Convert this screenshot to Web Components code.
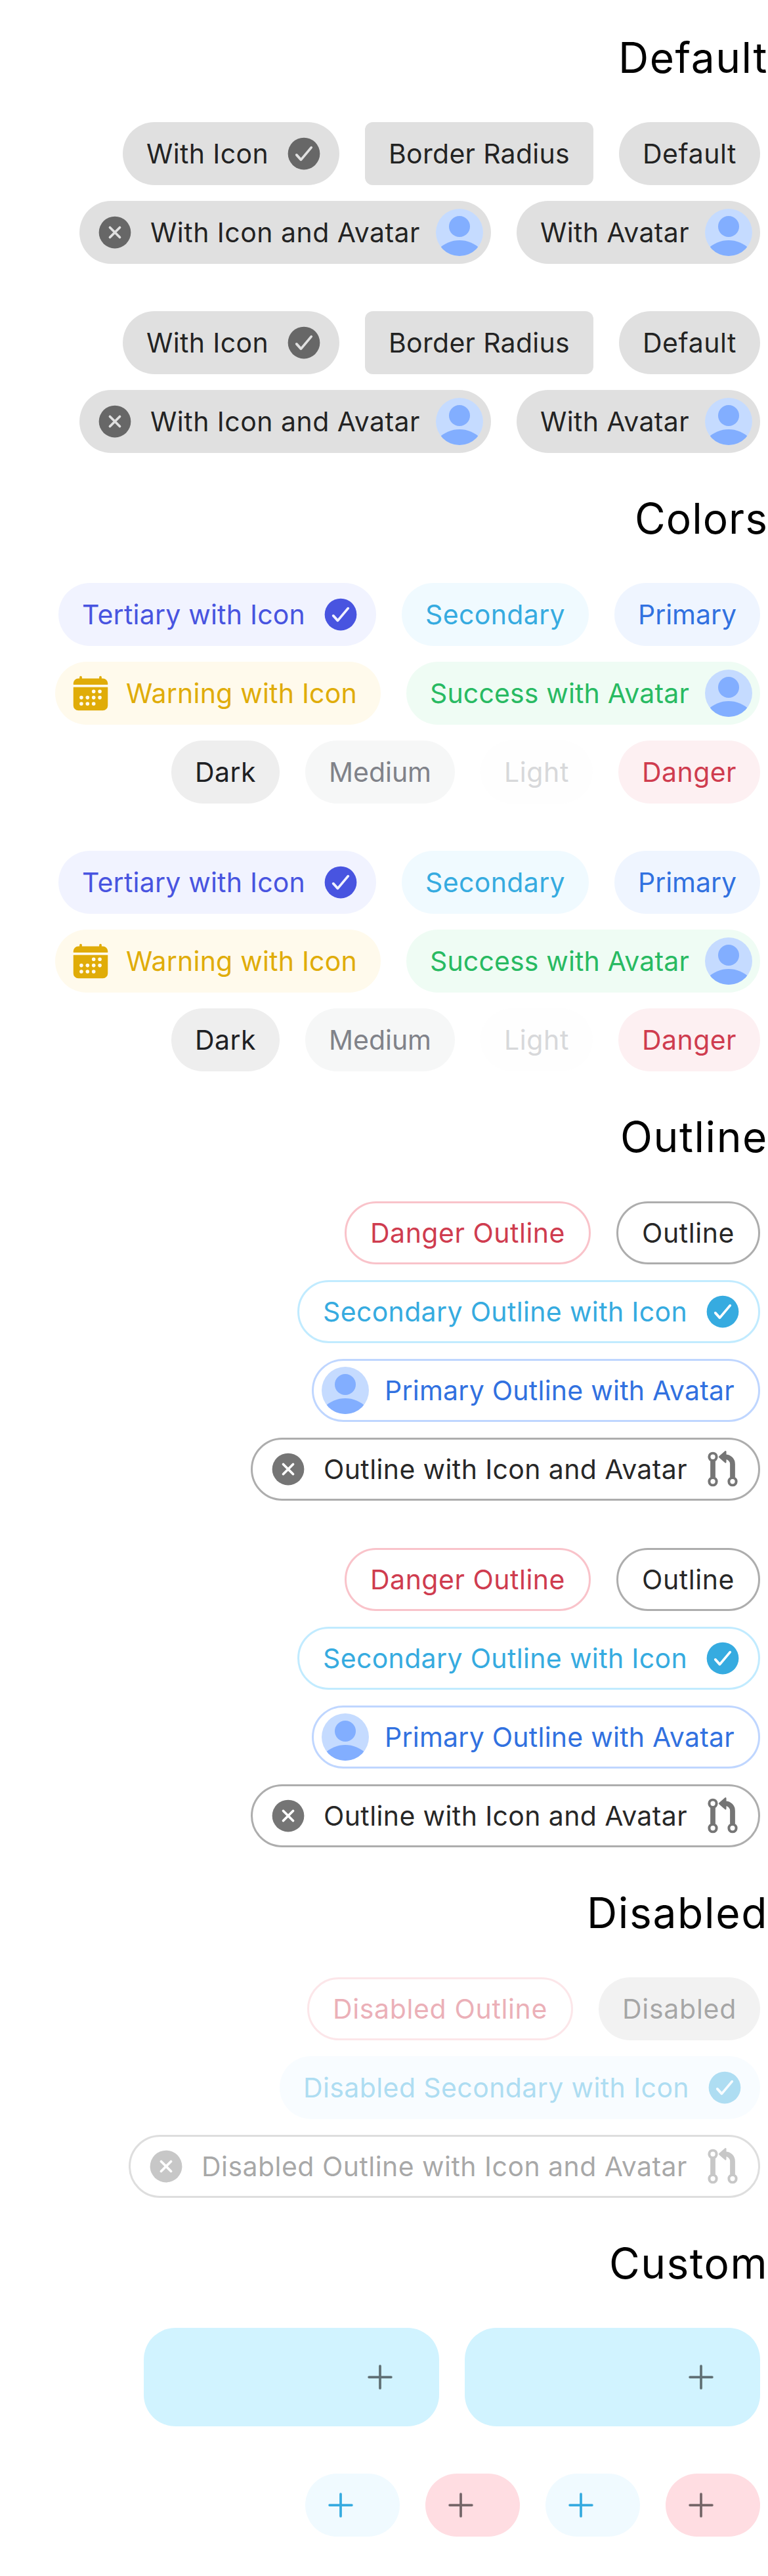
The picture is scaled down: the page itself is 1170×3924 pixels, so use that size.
<!DOCTYPE html>
<html lang="en" dir="rtl">
<head>
<meta charset="utf-8">
<title>Chip</title>
<style>
html, body { margin: 0; padding: 0; background: #fff; }
body { font-family: Inter, "Liberation Sans", sans-serif; color: #000; }
</style>
</head>
<body>
<chip-section heading="Default" heading-width="228" first>
  <chip-group>
    <chip-row>
      <ui-chip label-width="143">Default</ui-chip>
      <ui-chip label-width="276" square>Border Radius</ui-chip>
      <ui-chip label-width="186"><ui-icon slot="start" name="check"></ui-icon>With Icon</ui-chip>
    </chip-row>
    <chip-row>
      <ui-chip label-width="227"><ui-avatar slot="start"></ui-avatar>With Avatar</ui-chip>
      <ui-chip label-width="411"><ui-avatar slot="start"></ui-avatar>With Icon and Avatar<ui-icon slot="end" name="close"></ui-icon></ui-chip>
    </chip-row>
  </chip-group>
  <chip-group>
    <chip-row>
      <ui-chip label-width="143">Default</ui-chip>
      <ui-chip label-width="276" square>Border Radius</ui-chip>
      <ui-chip label-width="186"><ui-icon slot="start" name="check"></ui-icon>With Icon</ui-chip>
    </chip-row>
    <chip-row>
      <ui-chip label-width="227"><ui-avatar slot="start"></ui-avatar>With Avatar</ui-chip>
      <ui-chip label-width="411"><ui-avatar slot="start"></ui-avatar>With Icon and Avatar<ui-icon slot="end" name="close"></ui-icon></ui-chip>
    </chip-row>
  </chip-group>
</chip-section>

<chip-section heading="Colors" heading-width="203">
  <chip-group>
    <chip-row>
      <ui-chip color="primary" label-width="150">Primary</ui-chip>
      <ui-chip color="secondary" label-width="213">Secondary</ui-chip>
      <ui-chip color="tertiary" label-width="340"><ui-icon slot="start" name="check"></ui-icon>Tertiary with Icon</ui-chip>
    </chip-row>
    <chip-row>
      <ui-chip color="success" label-width="395"><ui-avatar slot="start"></ui-avatar>Success with Avatar</ui-chip>
      <ui-chip color="warning" label-width="352">Warning with Icon<ui-icon slot="end" name="calendar"></ui-icon></ui-chip>
    </chip-row>
    <chip-row>
      <ui-chip color="danger" label-width="144">Danger</ui-chip>
      <ui-chip color="light" label-width="99">Light</ui-chip>
      <ui-chip color="medium" label-width="156">Medium</ui-chip>
      <ui-chip color="dark" label-width="93">Dark</ui-chip>
    </chip-row>
  </chip-group>
  <chip-group>
    <chip-row>
      <ui-chip color="primary" label-width="150">Primary</ui-chip>
      <ui-chip color="secondary" label-width="213">Secondary</ui-chip>
      <ui-chip color="tertiary" label-width="340"><ui-icon slot="start" name="check"></ui-icon>Tertiary with Icon</ui-chip>
    </chip-row>
    <chip-row>
      <ui-chip color="success" label-width="395"><ui-avatar slot="start"></ui-avatar>Success with Avatar</ui-chip>
      <ui-chip color="warning" label-width="352">Warning with Icon<ui-icon slot="end" name="calendar"></ui-icon></ui-chip>
    </chip-row>
    <chip-row>
      <ui-chip color="danger" label-width="144">Danger</ui-chip>
      <ui-chip color="light" label-width="99">Light</ui-chip>
      <ui-chip color="medium" label-width="156">Medium</ui-chip>
      <ui-chip color="dark" label-width="93">Dark</ui-chip>
    </chip-row>
  </chip-group>
</chip-section>

<chip-section heading="Outline" heading-width="225">
  <chip-group>
    <chip-row>
      <ui-chip outline label-width="141">Outline</ui-chip>
      <ui-chip outline color="danger" label-width="297">Danger Outline</ui-chip>
    </chip-row>
    <chip-row>
      <ui-chip outline color="secondary" label-width="555"><ui-icon slot="start" name="check"></ui-icon>Secondary Outline with Icon</ui-chip>
    </chip-row>
    <chip-row>
      <ui-chip outline color="primary" label-width="533">Primary Outline with Avatar<ui-avatar slot="end"></ui-avatar></ui-chip>
    </chip-row>
    <chip-row>
      <ui-chip outline label-width="554"><ui-icon slot="start" name="git"></ui-icon>Outline with Icon and Avatar<ui-icon slot="end" name="close"></ui-icon></ui-chip>
    </chip-row>
  </chip-group>
  <chip-group>
    <chip-row>
      <ui-chip outline label-width="141">Outline</ui-chip>
      <ui-chip outline color="danger" label-width="297">Danger Outline</ui-chip>
    </chip-row>
    <chip-row>
      <ui-chip outline color="secondary" label-width="555"><ui-icon slot="start" name="check"></ui-icon>Secondary Outline with Icon</ui-chip>
    </chip-row>
    <chip-row>
      <ui-chip outline color="primary" label-width="533">Primary Outline with Avatar<ui-avatar slot="end"></ui-avatar></ui-chip>
    </chip-row>
    <chip-row>
      <ui-chip outline label-width="554"><ui-icon slot="start" name="git"></ui-icon>Outline with Icon and Avatar<ui-icon slot="end" name="close"></ui-icon></ui-chip>
    </chip-row>
  </chip-group>
</chip-section>

<chip-section heading="Disabled" heading-width="276">
  <chip-group>
    <chip-row>
      <ui-chip disabled label-width="174">Disabled</ui-chip>
      <ui-chip disabled outline color="danger" label-width="327">Disabled Outline</ui-chip>
    </chip-row>
    <chip-row>
      <ui-chip disabled color="secondary" label-width="588"><ui-icon slot="start" name="check"></ui-icon>Disabled Secondary with Icon</ui-chip>
    </chip-row>
    <chip-row>
      <ui-chip disabled outline label-width="740"><ui-icon slot="start" name="git"></ui-icon>Disabled Outline with Icon and Avatar<ui-icon slot="end" name="close"></ui-icon></ui-chip>
    </chip-row>
  </chip-group>
</chip-section>

<chip-section heading="Custom" heading-width="242">
  <chip-group>
    <chip-row>
      <icon-chip size="wide" tone="sky"></icon-chip>
      <icon-chip size="wide" tone="sky"></icon-chip>
    </chip-row>
  </chip-group>
  <chip-group>
    <chip-row>
      <icon-chip tone="pink"></icon-chip>
      <icon-chip tone="secondary"></icon-chip>
      <icon-chip tone="pink"></icon-chip>
      <icon-chip tone="secondary"></icon-chip>
    </chip-row>
  </chip-group>
</chip-section>

<script>
const ICONS = {
  check: '<circle cx="256" cy="256" r="208" fill="currentColor"/><path class="mark" d="M352 176L217.6 336 160 272"/>',
  close: '<circle cx="256" cy="256" r="208" fill="currentColor"/><path class="mark" d="M320 320L192 192M192 320l128-128"/>',
  add: '<path fill="none" stroke="currentColor" stroke-width="32" stroke-linecap="round" stroke-linejoin="round" d="M256 112v288M400 256H112"/>',
  calendar: '<path fill="currentColor" fill-rule="evenodd" d="M480 128a64 64 0 00-64-64h-16V48.45c0-8.61-6.62-16-15.23-16.43A16 16 0 00368 48v16H144V48.45c0-8.61-6.62-16-15.23-16.43A16 16 0 00112 48v16H96a64 64 0 00-64 64v12a4 4 0 004 4h440a4 4 0 004-4zM32 416a64 64 0 0064 64h320a64 64 0 0064-64V179a3 3 0 00-3-3H35a3 3 0 00-3 3z' +
    [[376,232],[376,312],[296,232],[296,312],[296,392],[216,312],[216,392],[136,312],[136,392]].map(([x, y]) => `M${x - 24} ${y}a24 24 0 1048 0a24 24 0 10-48 0z`).join('') + '"/>',
  git: '<g fill="none" stroke="currentColor"><g stroke-width="34"><circle cx="128" cy="96" r="48"/><circle cx="128" cy="416" r="48"/><circle cx="384" cy="416" r="48"/></g><path stroke-width="66" d="M128 152V360M384 360V192A94 94 0 0 0 290 96H284"/></g><path fill="currentColor" d="M210 85L286 19Q301 10 303 28V164Q301 182 286 173L210 107Q197 96 210 85z"/>'
};

const COLORS = {
  primary: ['56,128,255', '#3171e0'],
  secondary: ['61,194,255', '#36abe0'],
  tertiary: ['82,96,255', '#4854e0'],
  success: ['45,211,111', '#28ba62'],
  warning: ['255,196,9', '#e0ac08'],
  danger: ['235,68,90', '#cf3c4f'],
  light: ['244,245,248', '#d7d8da'],
  medium: ['146,148,156', '#808289'],
  dark: ['34,36,40', '#1e2023']
};

/* Spreads the tracking of a text so that its advance equals the given width. */
function track(el, text, width) {
  const natural = el.getBoundingClientRect().width;
  if (width && natural) el.style.letterSpacing = (width - natural) / text.length + 'px';
}

class UiIcon extends HTMLElement {
  constructor() { super(); this.attachShadow({ mode: 'open' }); }
  connectedCallback() {
    this.shadowRoot.innerHTML = `<style>
      :host { display: block; flex: none; width: 60px; height: 60px; color: var(--icon-color); }
      svg { display: block; width: 100%; height: 100%; }
      .mark { fill: none; stroke: var(--mark-color, #fff); stroke-width: 32; stroke-linecap: round; stroke-linejoin: round; }
    </style><svg viewBox="0 0 512 512">${ICONS[this.getAttribute('name')]}</svg>`;
  }
}

class UiAvatar extends HTMLElement {
  constructor() {
    super();
    this.attachShadow({ mode: 'open' }).innerHTML = `<style>
      :host { display: block; flex: none; width: 72px; height: 72px; border-radius: 50%; overflow: hidden; }
      svg { display: block; }
    </style><svg width="72" height="72" viewBox="0 0 72 72"><rect width="72" height="72" fill="#c5dbff"/><g fill="#82aeff"><circle cx="36" cy="27" r="16"/><circle cx="36" cy="93" r="45"/></g></svg>`;
  }
}

class UiChip extends HTMLElement {
  constructor() { super(); this.attachShadow({ mode: 'open' }); }
  connectedCallback() {
    const outline = this.hasAttribute('outline');
    const color = COLORS[this.getAttribute('color')];
    const rgb = color ? color[0] : '0,0,0';
    const bg = outline ? 'transparent' : `rgba(${rgb},${color ? .08 : .12})`;
    const text = color ? color[1] : 'rgba(0,0,0,.87)';
    const icon = color ? color[1] : outline ? '#757575' : '#676767';
    const mark = outline ? '#fff' : color ? `color-mix(in srgb, rgb(${rgb}) 8%, white)` : '#e0e0e0';
    this.shadowRoot.innerHTML = `<style>
      :host { display: flex; flex: none; box-sizing: border-box; align-items: center; height: 96px; padding: 0 36px;
        border-radius: ${this.hasAttribute('square') ? 12 : 48}px; background: ${bg}; color: ${text};
        border: ${outline ? `3px solid rgba(${rgb},.32)` : '0'};
        opacity: ${this.hasAttribute('disabled') ? .4 : 1};
        --icon-color: ${icon}; --mark-color: ${mark}; font-size: 41px; line-height: 60px; white-space: nowrap; }
      .label { direction: ltr; display: inline-block; }
      ::slotted(ui-icon[slot=start]) { margin-right: -12px; margin-left: 24px; }
      ::slotted(ui-icon[slot=end]) { margin-left: -12px; margin-right: 24px; }
      ::slotted(ui-avatar[slot=start]) { margin-right: -24px; margin-left: 24px; }
      ::slotted(ui-avatar[slot=end]) { margin-left: -24px; margin-right: 24px; }
    </style><slot name="start"></slot><span class="label"><slot></slot></span><slot name="end"></slot>`;
    track(this.shadowRoot.querySelector('.label'), this.textContent.trim(), +this.getAttribute('label-width'));
  }
}

class IconChip extends HTMLElement {
  constructor() { super(); this.attachShadow({ mode: 'open' }); }
  connectedCallback() {
    const wide = this.getAttribute('size') === 'wide';
    const [bg, fg] = {
      sky: ['#d1f3ff', '#607075'],
      pink: ['#ffdde2', '#756668'],
      secondary: ['rgba(61,194,255,.08)', '#36abe0']
    }[this.getAttribute('tone')];
    this.shadowRoot.innerHTML = `<style>
      :host { display: flex; flex: none; box-sizing: border-box; align-items: center; border-radius: 48px;
        width: ${wide ? 450 : 144}px; height: ${wide ? 150 : 96}px; padding-right: 60px;
        background: ${bg}; --icon-color: ${fg}; }
    </style><ui-icon name="add"></ui-icon>`;
  }
}

class ChipRow extends HTMLElement {
  constructor() {
    super();
    this.attachShadow({ mode: 'open' }).innerHTML = `<style>
      :host { display: flex; gap: 39px; padding: 0 12px; }
    </style><slot></slot>`;
  }
}

class ChipGroup extends HTMLElement {
  constructor() {
    super();
    this.attachShadow({ mode: 'open' }).innerHTML = `<style>
      :host { display: flex; flex-direction: column; gap: 24px; }
    </style><slot></slot>`;
  }
}

class ChipSection extends HTMLElement {
  constructor() { super(); this.attachShadow({ mode: 'open' }); }
  connectedCallback() {
    const heading = this.getAttribute('heading');
    this.shadowRoot.innerHTML = `<style>
      :host { display: block; }
      h1 { display: flex; align-items: flex-end; box-sizing: border-box; margin: 0; height: ${this.hasAttribute('first') ? 186 : 198}px;
        padding-bottom: 65px; font-size: 64px; line-height: 66px; font-weight: 400; white-space: nowrap; }
      h1 span { direction: ltr; flex: none; }
      .groups { display: flex; flex-direction: column; gap: 72px; }
    </style><h1><span>${heading}</span></h1><div class="groups"><slot></slot></div>`;
    track(this.shadowRoot.querySelector('span'), heading, +this.getAttribute('heading-width'));
  }
}

customElements.define('chip-section', ChipSection);
customElements.define('chip-group', ChipGroup);
customElements.define('chip-row', ChipRow);
customElements.define('ui-icon', UiIcon);
customElements.define('ui-avatar', UiAvatar);
customElements.define('ui-chip', UiChip);
customElements.define('icon-chip', IconChip);
</script>
</body>
</html>
